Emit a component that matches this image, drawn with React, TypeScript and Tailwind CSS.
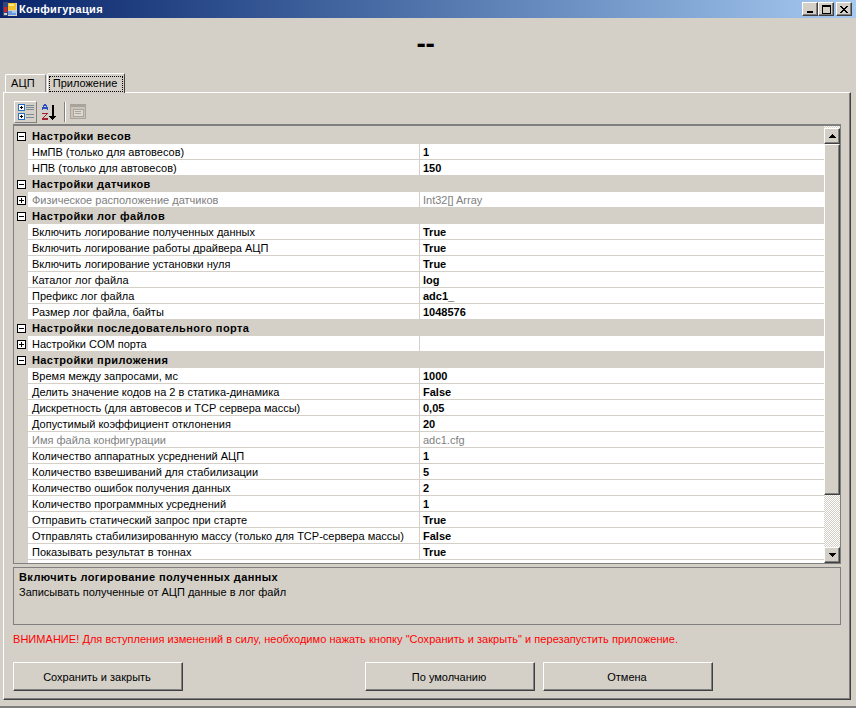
import React from "react";

type Row =
  | { g: string }
  | { l: string; v: string; off?: boolean; plus?: boolean };

const rows: Row[] = [
  { g: "Настройки весов" },
  { l: "НмПВ (только для автовесов)", v: "1" },
  { l: "НПВ (только для автовесов)", v: "150" },
  { g: "Настройки датчиков" },
  { l: "Физическое расположение датчиков", v: "Int32[] Array", off: true, plus: true },
  { g: "Настройки лог файлов" },
  { l: "Включить логирование полученных данных", v: "True" },
  { l: "Включить логирование работы драйвера АЦП", v: "True" },
  { l: "Включить логирование установки нуля", v: "True" },
  { l: "Каталог лог файла", v: "log" },
  { l: "Префикс лог файла", v: "adc1_" },
  { l: "Размер лог файла, байты", v: "1048576" },
  { g: "Настройки последовательного порта" },
  { l: "Настройки COM порта", v: "", plus: true },
  { g: "Настройки приложения" },
  { l: "Время между запросами, мс", v: "1000" },
  { l: "Делить значение кодов на 2 в статика-динамика", v: "False" },
  { l: "Дискретность (для автовесов и TCP сервера массы)", v: "0,05" },
  { l: "Допустимый коэффициент отклонения", v: "20" },
  { l: "Имя файла конфигурации", v: "adc1.cfg", off: true },
  { l: "Количество аппаратных усреднений АЦП", v: "1" },
  { l: "Количество взвешиваний для стабилизации", v: "5" },
  { l: "Количество ошибок получения данных", v: "2" },
  { l: "Количество программных усреднений", v: "1" },
  { l: "Отправить статический запрос при старте", v: "True" },
  { l: "Отправлять стабилизированную массу (только для TCP-сервера массы)", v: "False" },
  { l: "Показывать результат в тоннах", v: "True" },
];

function Exp({ plus }: { plus?: boolean }) {
  return (
    <svg width="9" height="9" viewBox="0 0 9 9" className="block" shapeRendering="crispEdges">
      <rect x="0.5" y="0.5" width="8" height="8" fill="#fff" stroke="#000" />
      <rect x="2" y="4" width="5" height="1" fill="#000" />
      {plus && <rect x="4" y="2" width="1" height="5" fill="#000" />}
    </svg>
  );
}

const raised =
  "border border-t-white border-l-white border-r-[#404040] border-b-[#404040] shadow-[inset_-1px_-1px_0_#808080]";

function WinBtn({ children, w }: { children: React.ReactNode; w: string }) {
  return (
    <div className={`${w} h-[14px] bg-[#d4d0c8] flex items-center justify-center ${raised}`}>{children}</div>
  );
}

function Btn({ children, className }: { children: React.ReactNode; className?: string }) {
  return (
    <div className={`w-[170px] h-[29px] flex items-center justify-center pt-[1px] pr-[2px] text-[11px] text-black ${raised} ${className ?? ""}`}>
      {children}
    </div>
  );
}

function Arrow({ down }: { down?: boolean }) {
  return (
    <svg width="7" height="4" viewBox="0 0 7 4" shapeRendering="crispEdges" className="block">
      {down ? (
        <path d="M0 0h7v1H6v1H5v1H4v1H3V3H2V2H1V1H0z" fill="#000" />
      ) : (
        <path d="M3 0h1v1h1v1h1v1h1v1H0V3h1V2h1V1h1z" fill="#000" />
      )}
    </svg>
  );
}

export default function App() {
  return (
    <div
      className="w-[856px] h-[708px] bg-[#d4d0c8] flex flex-col overflow-hidden border-b-2 border-[#808080] text-black"
      style={{ fontFamily: '"Liberation Sans", Arial, sans-serif' }}
    >
      {/* title bar */}
      <div className="h-[18px] shrink-0 flex items-center pl-[3px] pr-[4px] bg-gradient-to-r from-[#0a246a] to-[#a6caf0]">
        <svg width="14" height="14" viewBox="0 0 14 14" shapeRendering="crispEdges" className="block shrink-0 mr-[2px]">
          <rect x="0" y="0" width="14" height="14" fill="#d4d0c8" />
          <rect x="0" y="0" width="14" height="1" fill="#1c2f68" />
          <rect x="0" y="0" width="5" height="14" fill="#33457c" />
          <rect x="1" y="5" width="3" height="5" fill="#d92020" />
          <rect x="1" y="11" width="3" height="2" fill="#d4d0c8" />
          <rect x="5" y="1" width="8" height="7" fill="#f2c22c" />
          <rect x="6" y="2" width="5" height="2" fill="#fbe88a" />
          <rect x="5" y="9" width="8" height="4" fill="#6a9ae0" />
          <rect x="9" y="9" width="4" height="2" fill="#a8c8f0" />
        </svg>
        <span className="text-[11px] font-bold text-white tracking-[0.35px]">Конфигурация</span>
        <div className="ml-auto flex items-center">
          <WinBtn w="w-[16px]">
            <div className="w-[6px] h-[2px] bg-black mt-[6px]" />
          </WinBtn>
          <WinBtn w="w-[16px]">
            <div className="w-[9px] h-[9px] border border-t-2 border-black" />
          </WinBtn>
          <div className="w-[2px]" />
          <WinBtn w="w-[16px]">
            <svg width="8" height="7" viewBox="0 0 8 7" className="block" shapeRendering="crispEdges">
              <path d="M0 0h2v1h1v1h2V1h1V0h2v1H7v1H6v1H5v1h1v1h1v1h1v1H6V6H5V5H3v1H2v1H0V6h1V5h1V4h1V3H2V2H1V1H0z" fill="#000" />
            </svg>
          </WinBtn>
        </div>
      </div>

      {/* heading */}
      <div className="h-[54px] shrink-0 flex items-start justify-center">
        <span className="mt-[14px] text-[28px] leading-[24px] font-bold tracking-[-0.3px] ml-[-5px]">--</span>
      </div>

      {/* tabs */}
      <div className="h-[20px] shrink-0 flex items-end pl-[5px] relative z-10">
        <div className="w-[41px] h-[18px] border border-b-0 border-t-white border-l-white border-r-[#808080] rounded-t-[2px] text-[11px] flex items-center pl-[5px] tracking-[0.2px]">
          АЦП
        </div>
        <div className="w-[78px] h-[20px] ml-[1px] mb-[-1px] bg-[#d4d0c8] border border-b-0 border-t-white border-l-white border-r-[#404040] rounded-t-[2px] text-[11px] flex items-center justify-center p-[1px]">
          <div className="w-full h-[16px] pr-[2px] border border-dotted border-black flex items-center justify-center">
            Приложение
          </div>
        </div>
      </div>

      {/* tab page */}
      <div className="ml-[3px] w-[848px] h-[608px] shrink-0 border border-t-white border-l-white border-r-[#404040] border-b-[#404040] shadow-[inset_-1px_-1px_0_#808080] pl-[9px] flex flex-col">
        {/* toolbar */}
        <div className="h-[23px] mt-[8px] flex items-center pl-[1px] pb-[1px]">
          <div className="w-[23px] h-[22px] border border-t-white border-l-white border-r-[#808080] border-b-[#808080] flex items-center justify-center">
            <svg width="16" height="16" viewBox="0 0 16 16" shapeRendering="crispEdges" className="block">
              <rect x="0.5" y="0.5" width="6" height="6" fill="#fff" stroke="#2a6fc0" />
              <rect x="2" y="3" width="3" height="1" fill="#000" />
              <rect x="3" y="2" width="1" height="3" fill="#000" />
              <rect x="0.5" y="9.5" width="6" height="6" fill="#fff" stroke="#2a6fc0" />
              <rect x="2" y="12" width="3" height="1" fill="#000" />
              <rect x="3" y="11" width="1" height="3" fill="#000" />
              <path d="M8 1h8v1H8zM8 3h8v1H8zM8 5h8v1H8zM8 10h8v1H8zM8 13h8v1H8z" fill="#7f8a99" />
            </svg>
          </div>
          <div className="w-[24px] h-[22px] flex items-center justify-center">
            <svg width="16" height="17" viewBox="0 0 16 17" shapeRendering="crispEdges" className="block">
              <path d="M3 0h2v1h1v2h1v3H6V5H2v1H1V3h1V1h1zM3 3h2V2H3z" fill="#2a50c0" />
              <path d="M1 9h6v1H6v1H5v1H4v1H3v1h4v2H1v-2h1v-1h1v-1h1v-1h1v-1H1z" fill="#a02030" />
              <path d="M11 1h2v11h2v1h-1v1h-1v1h-1v1h-1v-1h-1v-1H9v-1H8v-1h3z" fill="#000" />
            </svg>
          </div>
          <div className="w-[2px] h-[20px] border-l border-[#808080] bg-white ml-[3px] mr-[4px]" />
          <svg width="16" height="16" viewBox="0 0 16 16" shapeRendering="crispEdges" className="block">
            <rect x="0.5" y="0.5" width="15" height="14" fill="#c8c4bc" stroke="#a8a49c" />
            <rect x="0" y="0" width="16" height="3" fill="#a8a49c" />
            <rect x="3" y="5" width="10" height="7" fill="#dedad2" stroke="#a8a49c" />
            <rect x="5" y="7" width="6" height="1" fill="#a8a49c" />
            <rect x="5" y="9" width="6" height="1" fill="#a8a49c" />
          </svg>
        </div>

        {/* property grid */}
        <div className="w-[828px] h-[440px] shrink-0 border border-t-2 border-[#808080] pt-[2px] flex overflow-hidden">
          <div className="w-[810px] shrink-0 flex flex-col overflow-hidden">
            {rows.map((r, i) =>
              "g" in r ? (
                <div key={i} className="h-[16px] shrink-0 flex items-center">
                  <div className="w-[14px] pl-[3px] shrink-0"><Exp /></div>
                  <span className="pl-[4px] text-[11px] font-bold tracking-[0.4px]">{r.g}</span>
                </div>
              ) : (
                <div key={i} className="h-[16px] shrink-0 flex">
                  <div className="w-[14px] pl-[3px] shrink-0 flex items-center">{r.plus && <Exp plus />}</div>
                  <div className="flex-1 flex bg-white border-b border-[#d4d0c8]">
                    <div className={`w-[391px] shrink-0 pl-[4px] text-[11px] leading-[17px] whitespace-nowrap overflow-hidden ${r.off ? "text-[#808080]" : ""}`}>
                      {r.l}
                    </div>
                    <div className={`flex-1 border-l border-[#d4d0c8] pl-[3px] text-[11px] leading-[17px] ${r.off ? "text-[#808080]" : "font-bold"}`}>
                      {r.v}
                    </div>
                  </div>
                </div>
              )
            )}
            <div className="h-[3px] shrink-0 ml-[14px] bg-white" />
          </div>
          {/* scrollbar */}
          <div className="w-[16px] shrink-0 flex flex-col mt-[-2px] pt-[2px] bg-[repeating-conic-gradient(#d4d0c8_0_25%,#fff_0_50%)] bg-[length:2px_2px]">
            <div className={`h-[16px] shrink-0 bg-[#d4d0c8] flex items-center justify-center ${raised}`}><Arrow /></div>
            <div className={`h-[351px] shrink-0 bg-[#d4d0c8] ${raised}`} />
            <div className="flex-1" />
            <div className={`h-[16px] shrink-0 bg-[#d4d0c8] flex items-center justify-center ${raised}`}><Arrow down /></div>
          </div>
        </div>

        {/* description */}
        <div className="w-[828px] h-[58px] shrink-0 mt-[3px] border border-[#808080] pl-[5px] pt-[2px] text-[11px]">
          <div className="font-bold leading-[15px] tracking-[0.4px]">Включить логирование полученных данных</div>
          <div className="leading-[15px]">Записывать полученные от АЦП данные в лог файл</div>
        </div>

        <div className="mt-[6px] h-[16px] text-[11px] leading-[16px] text-[#ff0000] tracking-[0.04px] whitespace-nowrap">
          ВНИМАНИЕ! Для вступления изменений в силу, необходимо нажать кнопку "Сохранить и закрыть" и перезапустить приложение.
        </div>

        <div className="mt-[15px] flex">
          <Btn>Сохранить и закрыть</Btn>
          <Btn className="ml-[182px]">По умолчанию</Btn>
          <Btn className="ml-[8px]">Отмена</Btn>
        </div>
      </div>
    </div>
  );
}
